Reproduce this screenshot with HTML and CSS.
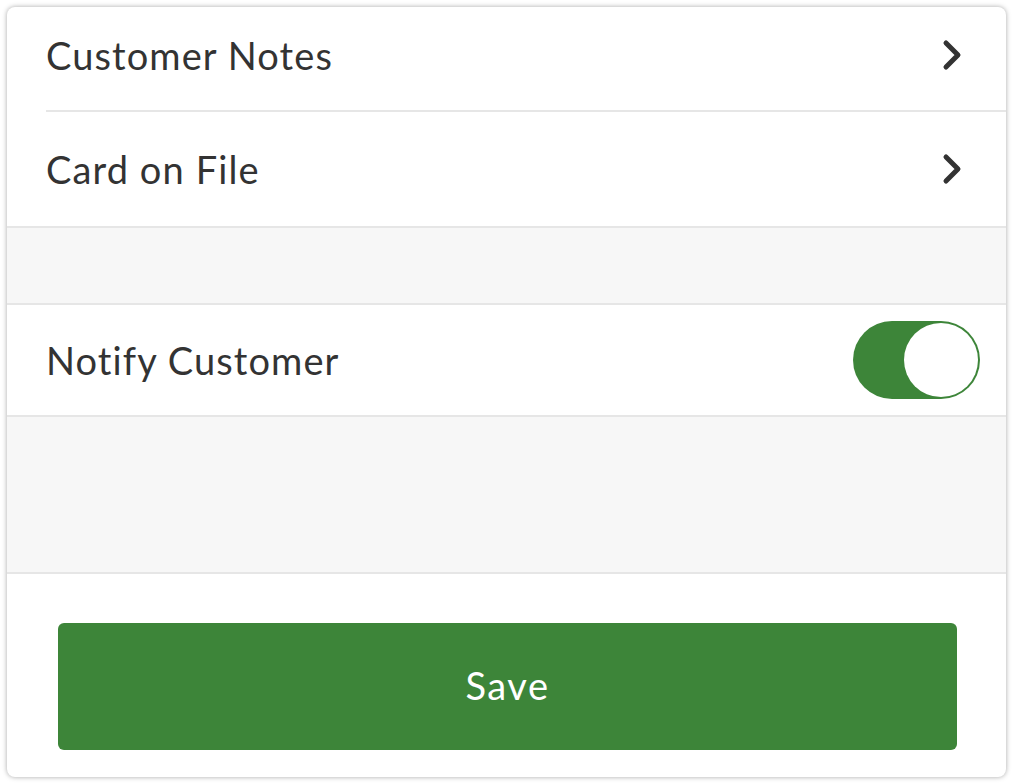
FILE: index.html
```html
<!DOCTYPE html>
<html>
<head>
<meta charset="utf-8">
<link rel="stylesheet" href="styles.css">
</head>
<body>
<div class="card">
  <div class="row row-inset">
    <span class="label">Customer Notes</span>
    <svg class="chev" width="20" height="32" viewBox="0 0 20 32"><path d="M4 4 L16 16 L4 28" fill="none" stroke="#333" stroke-width="5" stroke-linecap="round" stroke-linejoin="round"/></svg>
  </div>
  <div class="row row-full row2">
    <span class="label">Card on File</span>
    <svg class="chev" width="20" height="32" viewBox="0 0 20 32"><path d="M4 4 L16 16 L4 28" fill="none" stroke="#333" stroke-width="5" stroke-linecap="round" stroke-linejoin="round"/></svg>
  </div>
  <div class="spacer spacer-sm"></div>
  <div class="row row-full row3">
    <span class="label">Notify Customer</span>
    <div class="toggle"><div class="knob"></div></div>
  </div>
  <div class="spacer spacer-lg"></div>
  <div class="footer">
    <button class="save">Save</button>
  </div>
</div>
</body>
</html>
```
FILE: styles.css
```css
html, body {
  margin: 0;
  padding: 0;
  background: #ffffff;
}
body {
  width: 1015px;
  height: 784px;
  overflow: hidden;
  font-family: "Lato", "Open Sans", sans-serif;
}
.card {
  margin: 7px 0 0 7px;
  width: 999px;
  height: 770px;
  background: #fff;
  border-radius: 8px;
  box-shadow: 0 0 5px rgba(0,0,0,0.35);
  overflow: hidden;
  display: flex;
  flex-direction: column;
}
.row {
  display: flex;
  align-items: center;
  justify-content: space-between;
  padding-left: 39px;
  box-sizing: border-box;
  flex: none;
}
.label {
  font-size: 38px;
  color: #333;
  letter-spacing: 1.1px;
}
.row-inset {
  height: 105px;
  margin-left: 39px;
  padding-left: 0;
  padding-right: 44px;
  padding-bottom: 8px;
  border-bottom: 2px solid #e6e6e6;
}
.row2 {
  height: 116px;
  padding-right: 44px;
}
.row-full {
  border-bottom: 2px solid #e6e6e6;
}
.chev {
  display: block;
}
.spacer {
  background: #f7f7f7;
  border-bottom: 2px solid #e6e6e6;
  flex: none;
  box-sizing: border-box;
}
.spacer-sm { height: 77px; }
.row3 {
  height: 112px;
  padding-right: 26px;
}
.spacer-lg { height: 157px; }
.toggle {
  width: 127px;
  height: 78px;
  border-radius: 39px;
  background: #3d8539;
  position: relative;
  box-sizing: border-box;
}
.knob {
  position: absolute;
  right: 2px;
  top: 2px;
  width: 74px;
  height: 74px;
  border-radius: 50%;
  background: #fff;
}
.footer {
  flex: 1;
  padding: 49px 49px 0 51px;
}
.save {
  display: block;
  width: 100%;
  height: 127px;
  border: none;
  border-radius: 6px;
  background: #3d8539;
  color: #fff;
  font-family: "Lato", "Open Sans", sans-serif;
  font-size: 38px;
  letter-spacing: 1.5px;
  padding: 0 0 4px 0;
}
```
